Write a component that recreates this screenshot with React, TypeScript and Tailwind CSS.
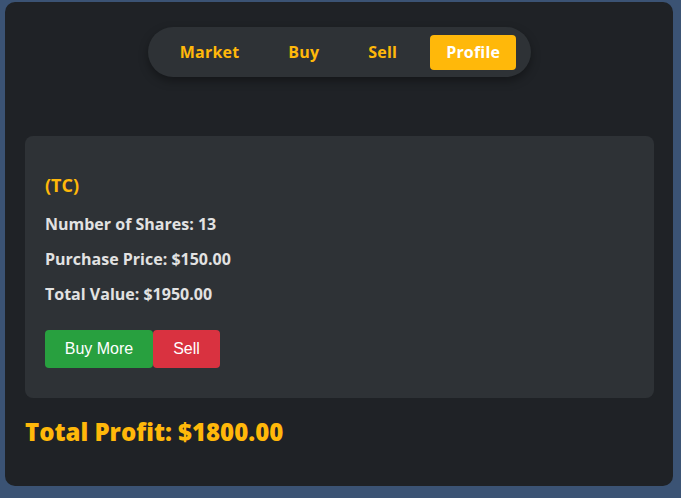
import { useState } from "react";

const tabs = ["Market", "Buy", "Sell", "Profile"];

export default function App() {
  const [active, setActive] = useState("Profile");

  return (
    <div className="min-h-[498px] bg-[#3b5374] pl-[5px] pr-[8px] pt-[2px] pb-[11px] font-['Open_Sans',sans-serif]">
      <div className="h-[484px] rounded-[10px] bg-[#1f2226] pl-5 pr-[19px] pt-6">
        <div className="flex justify-center">
          <nav className="flex items-center h-[50px] mt-px rounded-full bg-[#2e3236] pl-4 pr-[15px] gap-[17px] shadow-[0_4px_10px_rgba(0,0,0,0.35)]">
            {tabs.map((t) => (
              <button
                key={t}
                onClick={() => setActive(t)}
                className={
                  active === t
                    ? "h-[35px] px-4 rounded bg-[#ffb80a] text-white text-[16px] font-bold tracking-[0.2px]"
                    : "h-[35px] px-4 rounded text-[#ffb80a] text-[16px] font-bold tracking-[0.2px]"
                }
              >
                {t}
              </button>
            ))}
          </nav>
        </div>

        <div className="mt-[59px] rounded-lg bg-[#2e3236] px-5 pt-[37px] pb-[30px]">
          <h3 className="text-[18px] font-bold text-[#ffb80a] leading-6">(TC)</h3>
          <div className="mt-[17px] flex flex-col gap-[14px] text-[16px] font-bold text-[#e2e2e2] leading-[21px]">
            <p>Number of Shares: 13</p>
            <p>Purchase Price: $150.00</p>
            <p>Total Value: $1950.00</p>
          </div>
          <div className="mt-[25px] flex font-['Liberation_Sans',sans-serif]">
            <button className="h-[38px] w-[108px] rounded bg-[#28a03f] text-white text-base">Buy More</button>
            <button className="h-[38px] w-[67px] rounded bg-[#d93240] text-white text-base">Sell</button>
          </div>
        </div>

        <h2 className="mt-[18px] text-[24px] font-extrabold text-[#ffb80a] leading-8">Total Profit: $1800.00</h2>
      </div>
    </div>
  );
}
